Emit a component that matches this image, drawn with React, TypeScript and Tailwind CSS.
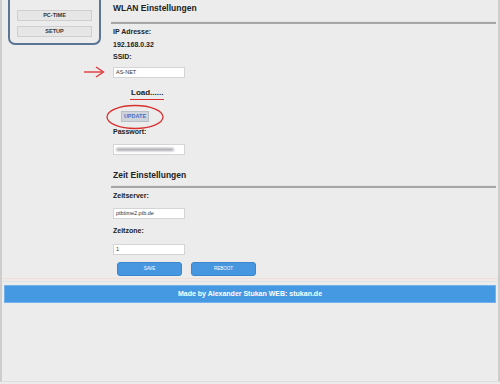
import React from "react";

// ── 共通スタイル ──
const FONT = "font-['Liberation_Sans',Arial,sans-serif]";
const label = "h-[12px] leading-[12px] text-[7px] font-bold text-[#222]";
const input =
  "h-[11px] w-[72px] bg-white border border-[#d4d4d4] px-[2px] text-[5.5px] leading-[9px] text-[#333]";

function Arrow() {
  return (
    <svg width="22" height="12" viewBox="0 0 22 12" className="absolute left-[-30px] top-[-1px]">
      <path d="M1 6 H20" stroke="#e03a3a" strokeWidth="1.4" fill="none" />
      <path d="M13 1 L20.5 6 L13 11" stroke="#e03a3a" strokeWidth="1.4" fill="none" />
    </svg>
  );
}

function Section({ title, top, gap }: { title: string; top: string; gap: string }) {
  return (
    <>
      <div className={`${top} h-[16px] leading-[16px] text-[8.5px] font-bold text-[#222]`}>{title}</div>
      <div className={`${gap} -ml-[2px] h-[3px] border-t border-[#e2e2e2] border-b-2 border-b-[#a6a6a6]`} />
    </>
  );
}

export default function App() {
  return (
    <div className={`${FONT} h-[384px] w-[500px] bg-[#ececec]`}>
      <div className="h-[382px] flex flex-col border-l-2 border-r-2 border-b border-l-[#cdcdcd] border-r-[#cdcdcd] border-b-[#dedede]">
        <div className="flex">
          {/* ── サイドメニュー ── */}
          <aside className="ml-[6px] w-[93px] h-[45px] border-2 border-t-0 border-[#5b7592] rounded-b-[7px] flex flex-col items-center gap-[5px] pt-[10px]">
            <button className="w-[75px] h-[11px] bg-[#e6e6e6] border border-[#cfcfcf] text-[5.5px] font-bold text-[#333] leading-[9px]">
              PC-TIME
            </button>
            <button className="w-[75px] h-[11px] bg-[#e6e6e6] border border-[#cfcfcf] text-[5.5px] font-bold text-[#333] leading-[9px]">
              SETUP
            </button>
          </aside>

          {/* ── 設定 ── */}
          <main className="flex-1 ml-[12px] mr-[2px] flex flex-col">
            <Section title="WLAN Einstellungen" top="mt-0" gap="mt-[5px]" />
            <div className={`${label} mt-[2px]`}>IP Adresse:</div>
            <div className={`${label} mt-[1px]`}>192.168.0.32</div>
            <div className={label}>SSID:</div>
            <div className="relative mt-[4px]">
              <Arrow />
              <div className={input}>AS-NET</div>
            </div>
            <div className="mt-[9px] ml-[17px] w-fit h-[13px] border-b border-[#d93030] px-[1px] text-[8px] leading-[12px] font-bold text-[#222]">
              Load......
            </div>
            <div className="relative mt-[11px] ml-[8px] h-[11px] flex">
              <svg width="60" height="26" viewBox="0 0 60 26" className="absolute left-[-16px] top-[-7px]">
                <ellipse cx="30" cy="13" rx="28" ry="11.5" stroke="#d93030" strokeWidth="1.3" fill="none" />
              </svg>
              <button className="relative h-[11px] w-[28px] bg-[#cfd3da] border border-[#b8bcc4] text-[5.5px] font-bold text-[#3d73c8] leading-[9px]">
                UPDATE
              </button>
            </div>
            <div className={`${label} mt-[4px]`}>Passwort:</div>
            <div className={`${input} mt-[6px] flex items-center`}>
              <div className="h-[3px] w-[58px] bg-[#a9a9b0] blur-[0.8px] rounded-full" />
            </div>

            <Section title="Zeit Einstellungen" top="mt-[12px]" gap="mt-[2px]" />
            <div className={`${label} mt-[2px]`}>Zeitserver:</div>
            <div className={`${input} mt-[6px]`}>ptbtime2.ptb.de</div>
            <div className={`${label} mt-[6px]`}>Zeitzone:</div>
            <div className={`${input} mt-[7px]`}>1</div>
            <div className="mt-[7px] ml-[4px] flex gap-[9px]">
              <button className="w-[65px] h-[14px] rounded-[3px] bg-[#4797e0] border border-[#3b86cc] text-white text-[4.5px] leading-[12px]">
                SAVE
              </button>
              <button className="w-[65px] h-[14px] rounded-[3px] bg-[#4797e0] border border-[#3b86cc] text-white text-[4.5px] leading-[12px]">
                REBOOT
              </button>
            </div>
          </main>
        </div>

        <div className="mt-[2px] h-[4px] border-t border-[#f3ddd2] border-b border-b-[#e2e2e2]" />

        {/* ── フッター ── */}
        <footer className="mt-[3px] mx-[2px] h-[18px] bg-[#4599e2] border border-[#73b2ec] text-center text-white text-[7px] font-bold leading-[16px]">
          Made by Alexander Stukan WEB: stukan.de
        </footer>
      </div>
    </div>
  );
}
